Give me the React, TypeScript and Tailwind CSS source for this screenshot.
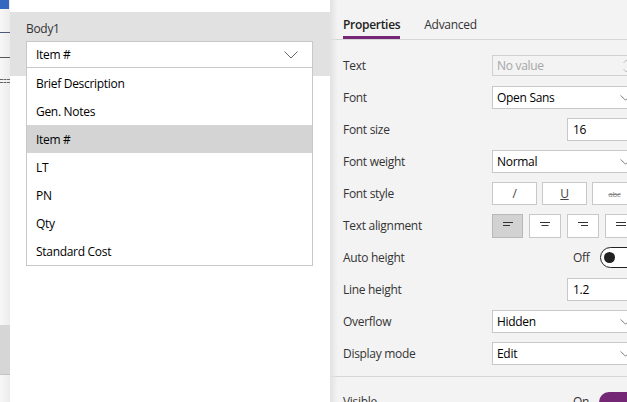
import { useState } from "react"

const options = ["Brief Description", "Gen. Notes", "Item #", "LT", "PN", "Qty", "Standard Cost"]

function Chevron({ className }: { className?: string }) {
  return (
    <svg viewBox="0 0 14 8" className={className} fill="none" stroke="currentColor" strokeWidth="1">
      <path d="M0.5 0.5 L7 7 L13.5 0.5" />
    </svg>
  )
}

function Select({ value }: { value: string }) {
  return (
    <div className="flex h-[23px] w-[148px] items-center justify-between border border-[#c8c8c8] bg-white pl-[4px] pr-[8px] text-black">
      <span>{value}</span>
      <Chevron className="h-[6px] w-[11px] text-[#555]" />
    </div>
  )
}

function NumberBox({ value }: { value: string }) {
  return (
    <div className="ml-[75px] flex h-[23px] w-[70px] items-center border border-[#c8c8c8] bg-white pl-[5px] text-black">
      {value}
    </div>
  )
}

function Toggle({ on }: { on: boolean }) {
  return (
    <div className="ml-[81px] flex items-center gap-[10px]">
      <span className="text-[#333]">{on ? "On" : "Off"}</span>
      <div
        className={
          on
            ? "flex h-[20px] w-[44px] items-center justify-end rounded-full bg-[#742774] px-[4px]"
            : "flex h-[21px] w-[44px] items-center rounded-full border-[1.5px] border-[#222] bg-white px-[3px]"
        }
      >
        <div className={on ? "h-[11px] w-[11px] rounded-full bg-white" : "h-[11px] w-[11px] rounded-full bg-[#222]"} />
      </div>
    </div>
  )
}

function AlignIcon({ kind }: { kind: "left" | "center" | "right" | "justify" }) {
  const short = kind === "left" ? "M0 3.5 H7" : kind === "right" ? "M3 3.5 H10" : kind === "center" ? "M1.5 3.5 H8.5" : "M0 3.5 H10"
  return (
    <svg viewBox="0 0 10 7" className="h-[7px] w-[10px] text-[#333]" fill="none" stroke="currentColor" strokeWidth="1">
      <path d={`M0 0.5 H10 ${short}`} />
    </svg>
  )
}

export default function App() {
  const [selected] = useState("Item #")

  const rows: { label: string; control: React.ReactNode }[] = [
    {
      label: "Text",
      control: (
        <div className="flex h-[21px] w-[148px] items-center justify-between border border-[#d0d0d0] bg-[#f3f3f3] pl-[4px] pr-[10px] text-[#a6a6a6]">
          <span>No value</span>
          <svg viewBox="0 0 6 14" className="h-[14px] w-[6px] text-[#c4c4c4]" fill="none" stroke="currentColor" strokeWidth="1">
            <path d="M0.5 4 L3 1 L5.5 4 M0.5 10 L3 13 L5.5 10" />
          </svg>
        </div>
      ),
    },
    { label: "Font", control: <Select value="Open Sans" /> },
    { label: "Font size", control: <NumberBox value="16" /> },
    { label: "Font weight", control: <Select value="Normal" /> },
    {
      label: "Font style",
      control: (
        <div className="flex gap-[5px]">
          <div className="flex h-[23px] w-[45px] items-center justify-center border border-[#c8c8c8] bg-white text-[#444]">/</div>
          <div className="flex h-[23px] w-[45px] items-center justify-center border border-[#c8c8c8] bg-white text-[#444] underline">U</div>
          <div className="flex h-[23px] w-[45px] items-center justify-center border border-[#c8c8c8] bg-white text-[8px] text-[#888] line-through">abc</div>
        </div>
      ),
    },
    {
      label: "Text alignment",
      control: (
        <div className="flex gap-[6px]">
          {(["left", "center", "right", "justify"] as const).map((k) => (
            <div
              key={k}
              className={
                k === "left"
                  ? "flex h-[24px] w-[31px] items-center justify-center border border-[#b8b8b8] bg-[#d2d2d2]"
                  : "flex h-[24px] w-[32px] items-center justify-center border border-[#c8c8c8] bg-white"
              }
            >
              <AlignIcon kind={k} />
            </div>
          ))}
        </div>
      ),
    },
    { label: "Auto height", control: <Toggle on={false} /> },
    { label: "Line height", control: <NumberBox value="1.2" /> },
    { label: "Overflow", control: <Select value="Hidden" /> },
    { label: "Display mode", control: <Select value="Edit" /> },
  ]

  return (
    <div className="flex h-[402px] w-[627px] overflow-hidden bg-white text-[12px] tracking-[-0.3px] font-['Open_Sans','Noto_Sans',sans-serif] text-[#333]">
      {/* left rail */}
      <div className="flex w-[10px] shrink-0 flex-col bg-gradient-to-r from-[#f7f7f7] to-[#ececec]">
        <div className="h-[9px] w-[9px] bg-[#3468c0]" />
        <div className="mt-[23px] h-px bg-[#4a5a78]" />
        <div className="mt-[24px] h-px bg-[#555]" />
        <div className="mt-[21px] h-px border-t border-dashed border-[#666]" />
        <div className="mt-[2px] h-px border-t border-dashed border-[#666]" />
        <div className="mt-[242px] h-[50px] border-b border-[#c4c4c4] bg-[#d6d6d6]" />
      </div>

      {/* canvas */}
      <div className="w-[320px] shrink-0 pt-[12px]">
        <div className="h-[64px] bg-[#e1e1e1] pl-[16px] pr-[17px] pt-[9px]">
          <div className="leading-[16px] text-[#333]">Body1</div>
          <div className="relative mt-[4px]">
            <div className="flex h-[27px] items-center justify-between border border-[#c8c8c8] bg-white pl-[9px] pr-[14px] pt-[1px] text-black">
              <span>{selected}</span>
              <Chevron className="h-[8px] w-[14px] text-[#666]" />
            </div>
            <div className="absolute left-0 right-0 top-full z-10 border border-t-0 border-[#c8c8c8] bg-white pt-[1px] text-black">
              {options.map((o) => (
                <div key={o} className={o === selected ? "flex h-[28px] items-center bg-[#d4d4d4] pl-[9px] pt-[2px]" : "flex h-[28px] items-center pl-[9px] pt-[2px]"}>
                  {o}
                </div>
              ))}
            </div>
          </div>
        </div>
      </div>

      {/* properties panel */}
      <div className="relative flex-1 bg-[#f3f3f3]">
        <div className="pointer-events-none absolute inset-y-0 left-0 w-[8px] bg-gradient-to-r from-[#e2e2e2] to-transparent" />
        <div className="flex h-[40px] items-end gap-[24px] border-b border-[#d6d6d6] pl-[13px]">
          <div className="flex flex-col">
            <span className="font-semibold leading-[20px] text-[#222]">Properties</span>
            <div className="mt-[1px] h-[3px] bg-[#742774]" />
          </div>
          <span className="pb-[4px] leading-[20px] text-[#333]">Advanced</span>
        </div>
        <div className="mt-[9px] flex flex-col pl-[13px]">
          {rows.map((r) => (
            <div key={r.label} className="flex h-[32px] items-center pt-[1px]">
              <div className="w-[149px] shrink-0">{r.label}</div>
              {r.control}
            </div>
          ))}
        </div>
        <div className="mt-[7px] border-t border-[#d6d6d6]" />
        <div className="flex h-[48px] items-center pl-[13px] pt-[2px]">
          <div className="w-[149px] shrink-0">Visible</div>
          <Toggle on />
        </div>
      </div>
    </div>
  )
}
